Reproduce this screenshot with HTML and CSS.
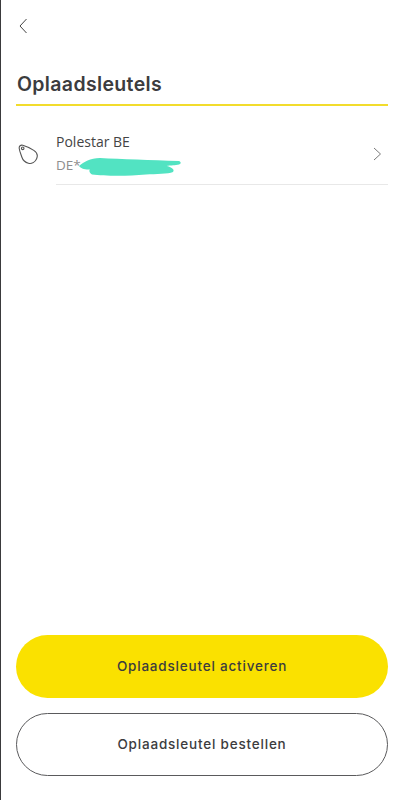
FILE: index.html
```html
<!DOCTYPE html>
<html lang="nl">
  <head>
    <meta charset="UTF-8" />
    <meta name="viewport" content="width=device-width, initial-scale=1.0" />
    <title>Oplaadsleutels</title>
    <link rel="stylesheet" href="styles.css">
  </head>
  <body>
    <main class="screen">
      <div class="top-bar">
        <svg class="back-icon" width="9" height="16" viewBox="0 0 9 16">
          <path d="M7.500 1 L1 8 L7.500 15" />
        </svg>
      </div>

      <h1 class="page-title">Oplaadsleutels</h1>

      <div class="key-row">
        <svg class="tag-icon" width="22" height="22" viewBox="0 0 22 22">
          <path d="M2.200 5.200 C2 3 3.600 1.700 5.800 2.300 C8 2.900 13 5 16.800 7.400 C20 9.400 21 12.600 19.600 15.800 C18.200 19 14.800 21 11.400 20.200 C8 19.400 5.800 17 4.800 14 C3.800 11 2.500 8 2.200 5.200 Z" />
          <circle cx="5.700" cy="5.300" r="1.300" />
        </svg>
        <div class="key-body">
          <div class="key-text">
            <div class="key-name">Polestar BE</div>
            <div class="key-id">DE*</div>
            <svg class="scribble" width="108" height="24" viewBox="0 0 108 24">
              <path d="M3 12 C8 8 14 4 24 4 C45 5 75 6 103 7 C106 8.500 105 10.500 100 11 C96 11.500 92 11.500 91 12 C96 13.500 99 15.500 97 18 C92 20 80 20 70 20.500 C50 22.500 28 22 16 20.500 C13 18.500 13 16 14 15.500 C10 15.500 5 15 3 12 Z" />
            </svg>
          </div>
          <svg class="chevron-icon" width="9" height="14" viewBox="0 0 9 14">
            <path d="M1 1 L7.500 7 L1 13" />
          </svg>
        </div>
      </div>

      <div class="actions">
        <button class="btn btn-primary">Oplaadsleutel activeren</button>
        <button class="btn btn-outline">Oplaadsleutel bestellen</button>
      </div>
    </main>
  </body>
</html>
```

FILE: styles.css
```css
body {
  font-family: "Open Sans", "Liberation Sans", sans-serif;
  margin: 0;
  background-color: #fff;
  color: #3c3c3e;
}
.screen {
  height: 800px;
  box-sizing: border-box;
  border-left: 1px solid #3a3a3c;
  padding: 0 14px 24.500px 15px;
  display: flex;
  flex-direction: column;
  overflow: hidden;
}
.top-bar {
  height: 69.500px;
  padding-top: 17px;
  padding-left: 3px;
  box-sizing: border-box;
}
.back-icon path,
.chevron-icon path {
  fill: none;
  stroke-width: 1;
}
.back-icon path {
  stroke: #444;
}
.chevron-icon path {
  stroke: #7a7a7a;
}
.page-title {
  font-family: Inter, "Open Sans", sans-serif;
  font-size: 19.500px;
  line-height: 28px;
  font-weight: 600;
  letter-spacing: 0.350px;
  margin: 0;
  padding: 0 0 6px 1px;
  height: 28px;
  border-bottom: 2px solid #f2dc2c;
}
.key-row {
  display: flex;
  align-items: flex-start;
  margin-top: 1px;
}
.tag-icon {
  margin-top: 36px;
  margin-left: 1px;
  flex: none;
}
.tag-icon path,
.tag-icon circle {
  fill: none;
  stroke: #555;
  stroke-width: 1.100;
}
.key-body {
  flex: 1;
  margin-left: 17px;
  height: 78px;
  border-bottom: 1px solid #e8e8e8;
  display: flex;
  justify-content: space-between;
  align-items: flex-start;
  box-sizing: border-box;
}
.key-text {
  position: relative;
  padding-top: 25.500px;
}
.key-name {
  font-size: 14px;
  line-height: 20px;
  color: #444;
}
.key-id {
  font-size: 13.500px;
  line-height: 18px;
  margin-top: 3.500px;
  color: #8e8e8e;
}
.scribble {
  position: absolute;
  left: 20px;
  top: 47px;
}
.scribble path {
  fill: #52e3c2;
}
.chevron-icon {
  margin-top: 40.500px;
  margin-right: 6px;
}
.actions {
  margin-top: auto;
  display: flex;
  flex-direction: column;
  gap: 15.500px;
}
.btn {
  height: 62.500px;
  border-radius: 32px;
  padding-bottom: 2px;
  font-family: Inter, "Open Sans", sans-serif;
  font-size: 13.500px;
  font-weight: 500;
  letter-spacing: 0.800px;
  color: #3c3c3e;
  cursor: pointer;
}
.btn-primary {
  background-color: #fae100;
  border: none;
}
.btn-outline {
  background-color: #fff;
  border: 1px solid #5a5a5c;
}
```
